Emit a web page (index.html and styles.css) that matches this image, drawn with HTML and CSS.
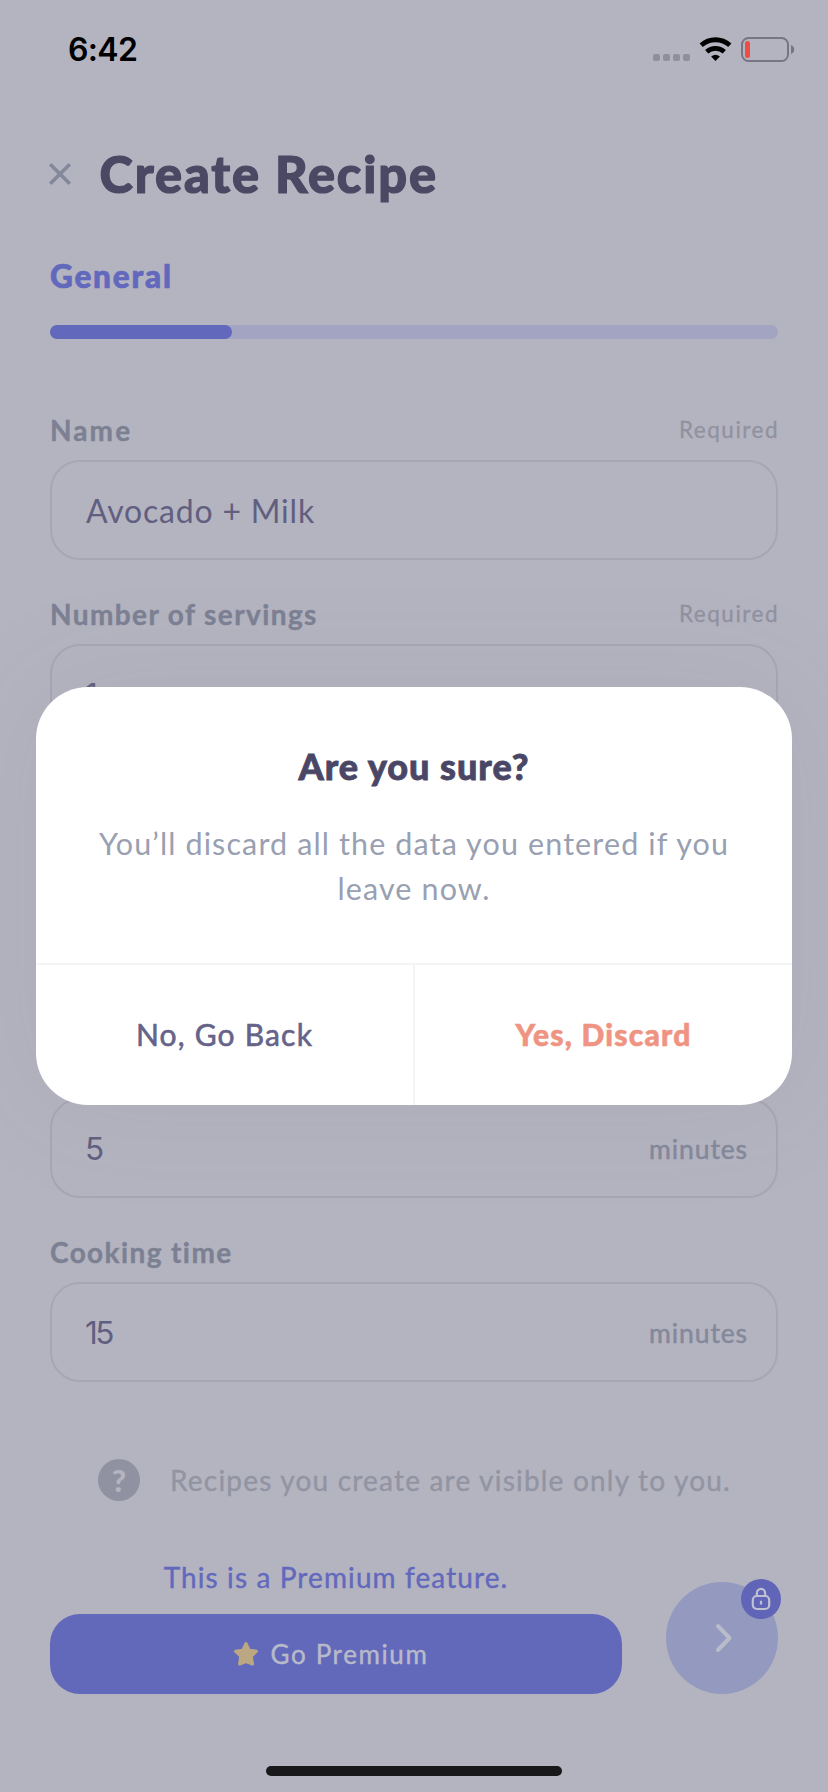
FILE: index.html
```html
<!DOCTYPE html>
<html lang="en">
<head>
<meta charset="utf-8">
<title>Create Recipe</title>
<link rel="stylesheet" href="styles.css">
</head>
<body>
<div class="screen">
  <div class="status">
    <span class="time">6:42</span>
    <svg class="status-icons" width="146" height="30" viewBox="0 0 146 30">
      <g fill="#8f8f9c"><rect x="1" y="19" width="7" height="7" rx="2"/><rect x="11" y="19" width="7" height="7" rx="2"/><rect x="21" y="19" width="7" height="7" rx="2"/><rect x="31" y="19" width="7" height="7" rx="2"/></g>
      <g fill="none" stroke="#000" stroke-width="4.8"><path d="M49.200 10.200a21.500 21.500 0 0 1 28.600 0"/><path d="M54.700 16.700a13.500 13.500 0 0 1 17.600 0"/></g>
      <path d="M63.500 26l-4.400-4.500a7 7 0 0 1 8.800 0z"/>
      <rect x="90" y="3" width="46" height="23" rx="6.500" fill="none" stroke="#777583" stroke-width="2"/>
      <rect x="93" y="6" width="5" height="17" rx="2.500" fill="#ef4d43"/>
      <path d="M139 10q3.200 1.500 3.200 4.500t-3.200 4.500z" fill="#777583"/>
    </svg>
  </div>
  <header class="header">
    <svg class="close" width="24" height="24" viewBox="0 0 24 24"><path d="M2.200 2.200l19.600 19.600M21.800 2.200L2.200 21.800" fill="none" stroke="#83889a" stroke-width="3.600"/></svg>
    <h1 class="title">Create Recipe</h1>
  </header>
  <div class="step">General</div>
  <div class="progress"><div class="progress-fill"></div></div>
  <div class="label-row first"><span class="label name-label">Name</span><span class="required">Required</span></div>
  <div class="field"><span class="value">Avocado + Milk</span></div>
  <div class="label-row"><span class="label">Number of servings</span><span class="required">Required</span></div>
  <div class="field"><span class="value number">1</span></div>
  <div class="field prep"><span class="value number">5</span><span class="unit">minutes</span></div>
  <div class="label-row"><span class="label">Cooking time</span></div>
  <div class="field"><span class="value number">15</span><span class="unit">minutes</span></div>
  <div class="note">
    <span class="help">?</span>
    <span class="note-text">Recipes you create are visible only to you.</span>
  </div>
  <footer class="footer">
    <div class="premium">
      <div class="premium-text">This is a Premium feature.</div>
      <div class="premium-button">
        <svg width="26" height="26" viewBox="0 0 26 26"><path d="M13 2.500l3.200 6.700 7.300 1-5.300 5.100 1.300 7.700L13 20.600l-6.500 2.400 1.300-7.700-5.300-5.100 7.300-1z" fill="#bca783" stroke="#bca783" stroke-width="3" stroke-linejoin="round"/></svg>
        <span class="go">Go Premium</span>
      </div>
    </div>
    <div class="next">
      <svg width="18" height="30" viewBox="0 0 18 30"><path d="M3 3l11.500 12L3 27" fill="none" stroke="#b9bcc9" stroke-width="4" stroke-linecap="round" stroke-linejoin="round"/></svg>
      <div class="lock"><svg width="20" height="24" viewBox="0 0 20 24" fill="none" stroke="#bfc0d2" stroke-width="2.200"><rect x="1.800" y="9" width="16.400" height="13" rx="4"/><path d="M5.900 9V6a4.100 4.100 0 0 1 8.200 0v3M10 13.800v3.600"/></svg></div>
    </div>
  </footer>
  <div class="home"></div>
  <section class="modal">
    <div class="modal-body">
      <h2 class="modal-title">Are you sure?</h2>
      <p class="modal-text">You’ll discard all the data you entered if you<br>leave now.</p>
    </div>
    <div class="actions">
      <div class="action back">No, Go Back</div>
      <div class="action discard">Yes, Discard</div>
    </div>
  </section>
</div>
</body>
</html>
```

FILE: styles.css
```css
* { box-sizing: border-box; }
body { margin: 0; background: #b4b4c0; font-family: Lato, "Noto Sans", sans-serif; font-variant-ligatures: none; }
h1, h2, p { margin: 0; }
.screen { position: relative; width: 828px; height: 1792px; padding: 0 50px; overflow: hidden; }
.status { height: 100px; margin: 0 -20px 0 0; padding-left: 18px; display: flex; align-items: center; justify-content: space-between; }
.time { font: 600 32px/100px Inter, sans-serif; letter-spacing: -0.7px; color: #000; }
.status-icons { display: block; }
.header { display: flex; align-items: center; height: 76px; margin-top: 36px; }
.close { margin-left: -2px; margin-right: 27.5px; }
.title { font-size: 50.5px; font-weight: 900; line-height: 76px; letter-spacing: 1.9px; color: #4b4864; white-space: nowrap; -webkit-text-stroke: 1.2px #4b4864; }
.step { margin-top: 44px; font-size: 31.5px; font-weight: 900; line-height: 40px; letter-spacing: 1.8px; color: #6269bd; -webkit-text-stroke: 0.7px #6269bd; }
.progress { margin-top: 29px; height: 14px; border-radius: 7px; background: #a3a4c1; }
.progress-fill { width: 25%; height: 14px; border-radius: 7px; background: #6269bd; }
.label-row { display: flex; justify-content: space-between; height: 36px; margin: 35px 0 13px; line-height: 38px; }
.label-row.first { margin-top: 72px; }
.label { font-size: 28px; font-weight: 700; letter-spacing: 1.4px; color: #7c8093; -webkit-text-stroke: 0.4px #7c8093; }
.name-label { letter-spacing: 2.1px; }
.required { font-size: 22.5px; letter-spacing: 1.5px; margin-right: -1px; color: #9092a1; -webkit-text-stroke: 0.3px #9092a1; }
.field { display: flex; align-items: center; justify-content: space-between; height: 100px; padding: 0 28px 0 34px; border: 2px solid #a6a6b4; border-radius: 30px; }
.field.prep { margin-top: 354px; }
.value { font-size: 32px; letter-spacing: 0.8px; color: #615f80; }
.value.number { font-family: Inter, sans-serif; font-size: 31.5px; letter-spacing: -2.5px; margin-left: -1px; }
.unit { font-size: 26.5px; line-height: 32px; padding-top: 1px; letter-spacing: 0.9px; color: #84889b; -webkit-text-stroke: 0.5px #84889b; }
.note { display: flex; align-items: center; gap: 30px; height: 42px; margin: 77px 0 0 48px; white-space: nowrap; }
.help { width: 42px; height: 42px; border-radius: 50%; background: #9092a2; color: #b4b4c0; font-size: 31px; font-weight: 900; line-height: 42px; text-align: center; }
.note-text { font-size: 28px; line-height: 40px; letter-spacing: 1.2px; color: #9294a3; -webkit-text-stroke: 0.4px #9294a3; }
.footer { display: flex; justify-content: space-between; align-items: flex-end; margin-top: 58px; }
.premium { width: 572px; }
.premium-text { font-size: 28px; line-height: 37px; height: 36px; letter-spacing: 1.1px; text-align: center; color: #6269bd; -webkit-text-stroke: 0.4px #6269bd; }
.premium-button { display: flex; align-items: center; justify-content: center; gap: 12px; height: 80px; margin-top: 19px; padding-right: 11px; border-radius: 30px; background: #6269bb; }
.go { font-size: 26px; letter-spacing: 1.6px; color: #b9bac9; -webkit-text-stroke: 0.4px #b9bac9; }
.next { position: relative; display: flex; align-items: center; justify-content: center; width: 112px; height: 112px; padding-left: 4px; border-radius: 50%; background: #9499c0; }
.lock { position: absolute; right: -3px; top: -3px; display: flex; align-items: center; justify-content: center; width: 40px; height: 40px; border-radius: 50%; background: #6065b8; }
.home { width: 296px; height: 10px; margin: 72px auto 0; border-radius: 5px; background: #18181b; }
.modal { position: absolute; left: 36px; top: 687px; width: 756px; height: 418px; border-radius: 52px; background: #fff; box-shadow: 0 0 110px rgba(125,125,150,0.14); text-align: center; display: flex; flex-direction: column; }
.modal-body { height: 278px; padding-top: 57px; border-bottom: 2px solid #f4f4f6; }
.modal-title { font-size: 36px; font-weight: 900; line-height: 44px; letter-spacing: 1px; color: #4a4766; -webkit-text-stroke: 0.8px #4a4766; }
.modal-text { margin-top: 33px; font-size: 30.5px; line-height: 45px; letter-spacing: 1.12px; color: #98a0b2; white-space: nowrap; }
.actions { display: grid; grid-template-columns: 379px 377px; flex: 1; }
.action { line-height: 139px; font-size: 30px; letter-spacing: 1.2px; }
.back { color: #656389; border-right: 2px solid #f4f4f6; -webkit-text-stroke: 0.6px #656389; }
.discard { font-weight: 900; color: #ef9482; -webkit-text-stroke: 0.6px #ef9482; }
```
